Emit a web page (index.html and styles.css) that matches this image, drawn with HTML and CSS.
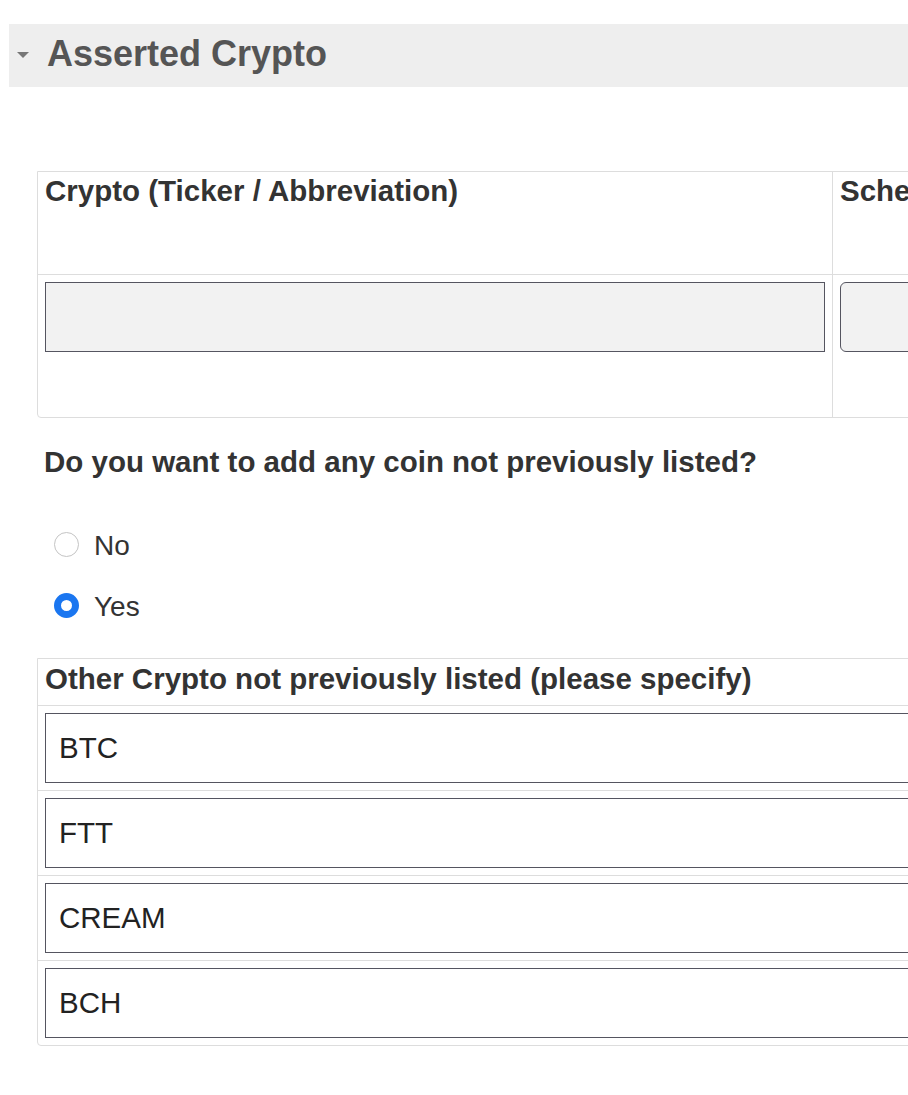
FILE: index.html
```html
<!DOCTYPE html>
<html lang="en">
<head>
<meta charset="utf-8">
<title>Asserted Crypto</title>
<link rel="stylesheet" href="styles.css">
</head>
<body>
<section class="section">
  <div class="band">
    <span class="caret"></span>
    <h2 class="band-title">Asserted Crypto</h2>
  </div>
  <div class="content">
    <div class="grid grid-one">
      <div class="cell head">Crypto (Ticker / Abbreviation)</div>
      <div class="cell head head-nowrap">Schedule</div>
      <div class="cell body last">
        <input class="field field-gray" type="text" value="" readonly>
      </div>
      <div class="cell body last">
        <input class="field field-gray field-round" type="text" value="" readonly>
      </div>
    </div>

    <p class="question">Do you want to add any coin not previously listed?</p>

    <div class="radios">
      <label class="radio-row">
        <span class="radio"></span>
        <span class="radio-label">No</span>
      </label>
      <label class="radio-row">
        <span class="radio radio-on"></span>
        <span class="radio-label">Yes</span>
      </label>
    </div>

    <div class="grid grid-two">
      <div class="cell head head-short">Other Crypto not previously listed (please specify)</div>
      <div class="cell row"><input class="field" type="text" value="BTC" readonly></div>
      <div class="cell row"><input class="field" type="text" value="FTT" readonly></div>
      <div class="cell row"><input class="field" type="text" value="CREAM" readonly></div>
      <div class="cell row last"><input class="field" type="text" value="BCH" readonly></div>
    </div>
  </div>
</section>
</body>
</html>
```

FILE: styles.css
```css
html, body {
  margin: 0;
  padding: 0;
  background: #ffffff;
  overflow: hidden;
}

body {
  font-family: "Liberation Sans", Arial, sans-serif;
  color: #333333;
}

.section {
  margin: 24px 0 0 9px;
}

.band {
  display: flex;
  align-items: flex-start;
  height: 63px;
  box-sizing: border-box;
  padding: 9px 0 0 8px;
  background: #eeeeee;
}

.caret {
  width: 0;
  height: 0;
  border-left: 6px solid transparent;
  border-right: 6px solid transparent;
  border-top: 6px solid #777777;
  margin: 19px 18px 0 0;
  flex: none;
}

.band-title {
  margin: 0;
  font-size: 36px;
  line-height: 41px;
  font-weight: bold;
  color: #555555;
  white-space: nowrap;
}

.content {
  padding: 84px 0 0 28px;
}

.grid {
  display: grid;
  border: 1px solid #dddddd;
  border-radius: 0 0 4px 4px;
  box-sizing: border-box;
}

.grid-one {
  grid-template-columns: 795px 420px;
  width: 1217px;
}

.grid-two {
  grid-template-columns: 1100px;
  width: 1102px;
  margin-top: 36px;
}

.cell {
  box-sizing: border-box;
  border-right: 1px solid #dddddd;
  border-bottom: 1px solid #dddddd;
  overflow: hidden;
}

.cell.last {
  border-bottom: none;
}

.head {
  height: 103px;
  padding: 2px 7px 0 7px;
  font-size: 29.5px;
  line-height: 34px;
  font-weight: bold;
  color: #333333;
}

.head-nowrap {
  white-space: nowrap;
}

.head-short {
  height: 47px;
  padding-top: 3px;
  white-space: nowrap;
}

.body {
  height: 142px;
  padding: 7px 7px 65px 7px;
}

.row {
  height: 85px;
  padding: 7px;
}

.row.last {
  height: 84px;
}

.field {
  display: block;
  box-sizing: border-box;
  width: 780px;
  height: 70px;
  margin: 0;
  padding: 0 13px;
  border: 1px solid #555560;
  border-radius: 0;
  background: #ffffff;
  font-family: "Liberation Sans", Arial, sans-serif;
  font-size: 29.5px;
  color: #222222;
  outline: none;
}

.grid-two .field {
  width: 1086px;
}

.field-gray {
  background: #f2f2f2;
}

.field-round {
  border-radius: 6px;
  width: 406px;
}

.question {
  margin: 27px 0 0 0;
  padding-left: 7px;
  font-size: 29.5px;
  line-height: 34px;
  font-weight: bold;
  color: #333333;
  white-space: nowrap;
}

.radios {
  display: flex;
  flex-direction: column;
  gap: 27px;
  margin-top: 48px;
  padding-left: 17px;
}

.radio-row {
  display: flex;
  align-items: center;
  height: 34px;
}

.radio {
  width: 25px;
  height: 25px;
  box-sizing: border-box;
  border: 1px solid #c4c4c4;
  border-radius: 50%;
  background: #ffffff;
  flex: none;
  margin-right: 15px;
}

.radio-on {
  border: 7px solid #1a76f0;
}

.radio-label {
  padding-top: 4px;
  font-size: 28px;
  line-height: 30px;
  color: #333333;
}
```
